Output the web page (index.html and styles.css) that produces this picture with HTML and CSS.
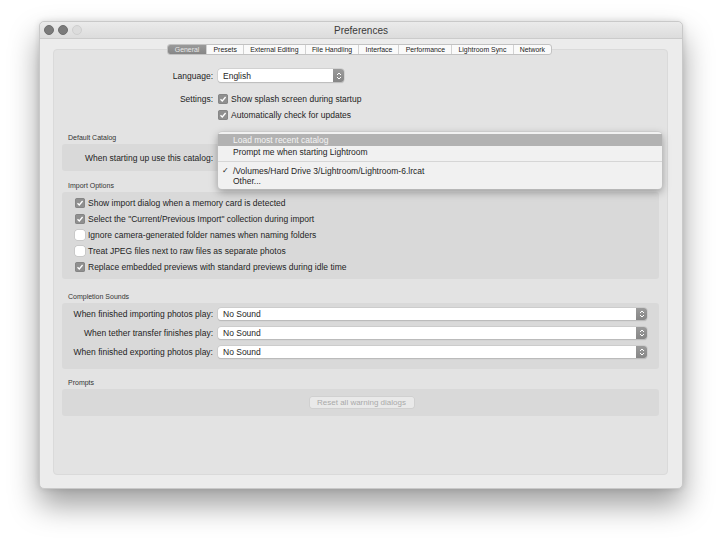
FILE: index.html
```html
<!DOCTYPE html>
<html>
<head>
<meta charset="utf-8">
<link rel="stylesheet" href="styles.css">
</head>
<body>
<div class="window">
  <div class="titlebar">
    <div class="lights"><span class="light dark"></span><span class="light dark"></span><span class="light pale"></span></div>
    <div class="title">Preferences</div>
  </div>
  <div class="body">
    <div class="tabs">
      <span class="tab active">General</span><span class="tab">Presets</span><span class="tab">External Editing</span><span class="tab">File Handling</span><span class="tab">Interface</span><span class="tab">Performance</span><span class="tab">Lightroom Sync</span><span class="tab">Network</span>
    </div>
    <div class="panel">
      <div class="row lang">
        <span class="lbl">Language:</span>
        <span class="popup small"><span class="ptext">English</span><span class="arrows"><svg viewBox="0 0 10 10" width="10" height="10"><path d="M3 4 L5 2 L7 4 M3 6 L5 8 L7 6" fill="none" stroke="#fff" stroke-width="1"/></svg></span></span>
      </div>
      <div class="row set1">
        <span class="lbl">Settings:</span>
        <span class="cb on"><svg viewBox="0 0 10 10" width="10" height="10"><path d="M2.5 5.2 L4.3 7 L7.6 3" fill="none" stroke="#fff" stroke-width="1.3"/></svg></span>
        <span class="ctext">Show splash screen during startup</span>
      </div>
      <div class="row set2">
        <span class="lbl"></span>
        <span class="cb on"><svg viewBox="0 0 10 10" width="10" height="10"><path d="M2.5 5.2 L4.3 7 L7.6 3" fill="none" stroke="#fff" stroke-width="1.3"/></svg></span>
        <span class="ctext">Automatically check for updates</span>
      </div>

      <div class="sec first">Default Catalog</div>
      <div class="box catbox">
        <div class="row grow">
          <span class="lbl blbl">When starting up use this catalog:</span>
        </div>
      </div>

      <div class="sec imps">Import Options</div>
      <div class="box imp">
        <div class="crow"><span class="cb on"><svg viewBox="0 0 10 10" width="10" height="10"><path d="M2.5 5.2 L4.3 7 L7.6 3" fill="none" stroke="#fff" stroke-width="1.3"/></svg></span><span class="ctext">Show import dialog when a memory card is detected</span></div>
        <div class="crow"><span class="cb on"><svg viewBox="0 0 10 10" width="10" height="10"><path d="M2.5 5.2 L4.3 7 L7.6 3" fill="none" stroke="#fff" stroke-width="1.3"/></svg></span><span class="ctext">Select the "Current/Previous Import" collection during import</span></div>
        <div class="crow"><span class="cb off"></span><span class="ctext">Ignore camera-generated folder names when naming folders</span></div>
        <div class="crow"><span class="cb off"></span><span class="ctext">Treat JPEG files next to raw files as separate photos</span></div>
        <div class="crow"><span class="cb on"><svg viewBox="0 0 10 10" width="10" height="10"><path d="M2.5 5.2 L4.3 7 L7.6 3" fill="none" stroke="#fff" stroke-width="1.3"/></svg></span><span class="ctext">Replace embedded previews with standard previews during idle time</span></div>
      </div>

      <div class="sec snd">Completion Sounds</div>
      <div class="box sounds">
        <div class="srow"><span class="lbl blbl">When finished importing photos play:</span><span class="popup wide"><span class="ptext">No Sound</span><span class="arrows"><svg viewBox="0 0 10 10" width="10" height="10"><path d="M3 4 L5 2 L7 4 M3 6 L5 8 L7 6" fill="none" stroke="#fff" stroke-width="1"/></svg></span></span></div>
        <div class="srow"><span class="lbl blbl">When tether transfer finishes play:</span><span class="popup wide"><span class="ptext">No Sound</span><span class="arrows"><svg viewBox="0 0 10 10" width="10" height="10"><path d="M3 4 L5 2 L7 4 M3 6 L5 8 L7 6" fill="none" stroke="#fff" stroke-width="1"/></svg></span></span></div>
        <div class="srow"><span class="lbl blbl">When finished exporting photos play:</span><span class="popup wide"><span class="ptext">No Sound</span><span class="arrows"><svg viewBox="0 0 10 10" width="10" height="10"><path d="M3 4 L5 2 L7 4 M3 6 L5 8 L7 6" fill="none" stroke="#fff" stroke-width="1"/></svg></span></span></div>
      </div>

      <div class="sec prm">Prompts</div>
      <div class="box prompts">
        <span class="btn">Reset all warning dialogs</span>
      </div>

      <div class="menu">
        <div class="mitem hl">Load most recent catalog</div>
        <div class="mitem">Prompt me when starting Lightroom</div>
        <div class="msep"></div>
        <div class="mitem sm"><span class="chk">✓</span>/Volumes/Hard Drive 3/Lightroom/Lightroom-6.lrcat</div>
        <div class="mitem sm">Other...</div>
      </div>
    </div>
  </div>
</div>
</body>
</html>
```

FILE: styles.css
```css
* { box-sizing: border-box; }
html, body { margin: 0; padding: 0; background: #ffffff; }
body {
  width: 722px; height: 545px; overflow: hidden;
  font-family: "Liberation Sans", Arial, sans-serif;
  color: #1e1e1e;
  font-size: 8.5px;
}
.window {
  margin: 21px 0 0 39px;
  width: 644px; height: 468px;
  background: #ececec;
  border-radius: 5px;
  border: 1px solid #c9c9c9;
  box-shadow: 0 16px 30px rgba(0,0,0,0.38), 0 0 6px rgba(0,0,0,0.12);
  overflow: visible;
}
.titlebar {
  height: 17px;
  border-radius: 5px 5px 0 0;
  background: linear-gradient(#ebebeb, #dcdcdc);
  border-bottom: 1px solid #cbcbcb;
  display: flex; align-items: center;
  position: relative;
}
.lights { display: flex; gap: 4px; padding-left: 4px; }
.light { width: 10px; height: 10px; border-radius: 50%; display: block; }
.light.dark { background: #7b7b7b; border: 1px solid #6e6e6e; }
.light.pale { background: #dcdcdc; border: 1px solid #cfcfcf; }
.title {
  position: absolute; left: 0; right: 0; top: 0; bottom: 0;
  display: flex; align-items: center; justify-content: center;
  font-size: 10px; color: #3a3a3a;
  pointer-events: none;
}
.body { padding: 5px 14px 0 13px; }
.tabs {
  display: flex; justify-content: center;
  position: relative; z-index: 2;
  margin: 0 auto -6px auto;
  width: max-content;
  background: #fafafa;
  border: 1px solid #c2c2c2;
  border-radius: 3px;
  height: 11px;
  transform: translateX(-1px);
}
.tab {
  font-size: 6.9px; line-height: 9px;
  padding: 0 6.2px;
  color: #222;
  border-left: 1px solid #d2d2d2;
}
.tab:first-child { border-left: none; }
.tab.active {
  background: linear-gradient(#9a9a9a, #868686);
  color: #e8e8e8;
  border-radius: 2px 0 0 2px;
  padding: 0 7px;
}
.panel {
  position: relative;
  height: 426px;
  background: #e3e3e3;
  border: 1px solid #dadada;
  border-radius: 4px;
  padding-top: 19px;
}
.row { display: flex; align-items: center; }
.lbl { width: 164px; text-align: right; padding-right: 5px; flex: none; color: #1e1e1e; }
.lang { height: 13px; }
.set1 { height: 12px; margin-top: 11px; }
.set2 { height: 12px; margin-top: 4px; }
.popup {
  display: flex; align-items: center; justify-content: space-between;
  height: 13px;
  background: #ffffff;
  border-radius: 3px;
  box-shadow: 0 0 0 0.5px #c3c3c3, 0 0.5px 1px rgba(0,0,0,0.2);
}
.popup.small { width: 126px; }
.popup.wide { width: 429px; height: 12px; }
.ptext { padding-left: 5px; }
.arrows {
  width: 11px; height: 100%;
  background: linear-gradient(#9b9b9b, #868686);
  border-radius: 0 3px 3px 0;
  display: flex; align-items: center; justify-content: center;
}
.cb {
  width: 10px; height: 10px; border-radius: 2.5px; flex: none;
  display: flex; align-items: center; justify-content: center;
  margin-right: 3px;
}
.cb.on { background: #8f8f8f; box-shadow: inset 0 0 0 0.5px #7d7d7d; }
.cb.off { background: #ffffff; box-shadow: 0 0 0 0.5px #b9b9b9; }
.ctext { white-space: nowrap; }
.sec {
  font-size: 7px; color: #333;
  margin: 12px 0 0 14px;
  height: 10px; line-height: 10px;
}
.sec.imps { margin-top: 10px; }
.sec.snd { margin-top: 13px; }
.sec.prm { margin-top: 9px; }
.box {
  margin: 1px 8px 0 8px;
  background: #d9d9d9;
  border-radius: 3px;
}
.blbl { width: 156px; }
.catbox { height: 27px; display: flex; align-items: center; }
.imp { height: 87px; padding: 3px 0 0 13px; }
.crow { display: flex; align-items: center; height: 16px; }
.sounds { height: 66px; padding-top: 1px; }
.srow { display: flex; align-items: center; height: 19px; }
.prompts { height: 27px; display: flex; align-items: center; justify-content: center; padding-left: 2px; }
.btn {
  width: 104px; height: 11px;
  display: flex; align-items: center; justify-content: center;
  background: #e9e9e9;
  border-radius: 2px;
  box-shadow: 0 0 0 0.5px #c8c8c8;
  color: #a9a9a9;
  font-size: 8px;
}
.menu {
  position: absolute;
  left: 164px; top: 82px;
  width: 444px; height: 57px;
  background: #f1f1f1;
  border-radius: 4px;
  box-shadow: 0 0 0 0.5px #c4c4c4, 0 3px 8px rgba(0,0,0,0.35);
  padding-top: 2px;
  z-index: 5;
}
.mitem { height: 12px; line-height: 12px; padding-left: 15px; position: relative; white-space: nowrap; }
.mitem.sm { height: 10px; line-height: 10px; }
.mitem.hl { background: #b2b2b2; color: #f4f4f4; }
.msep { height: 1px; background: #d6d6d6; margin: 3px 0 4px 0; }
.chk { position: absolute; left: 4px; top: 0; font-size: 8px; }
```
